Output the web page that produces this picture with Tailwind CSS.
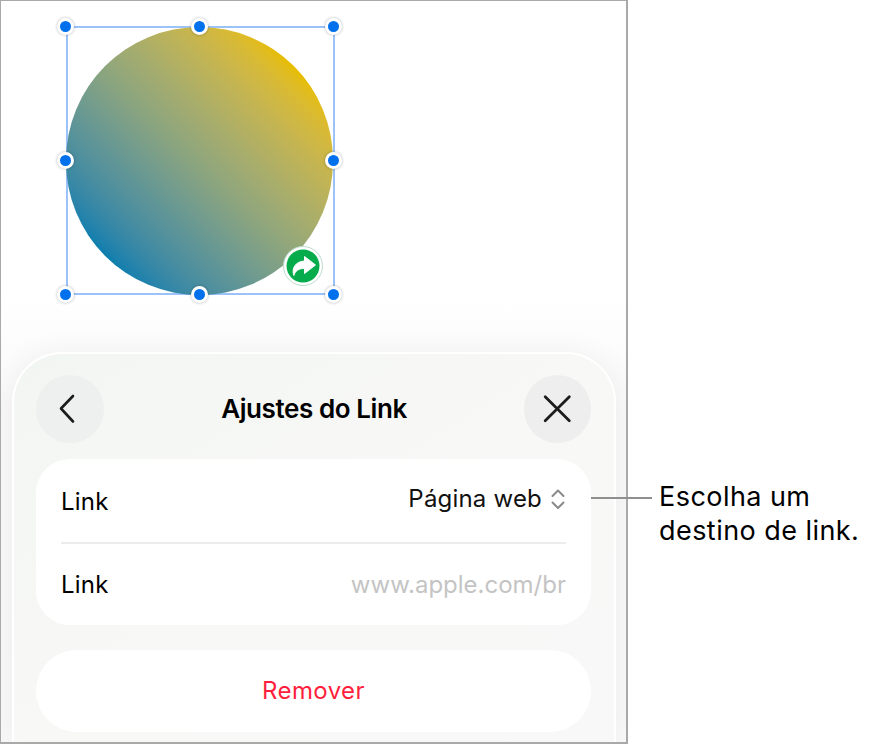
<!DOCTYPE html>
<html lang="pt">
<head>
  <meta charset="UTF-8" />
  <title>Ajustes do Link</title>
  <script src="https://cdn.jsdelivr.net/npm/@tailwindcss/browser@4"></script>
</head>
<body class="bg-white w-[872px] h-[745px] overflow-hidden font-['Inter',sans-serif] relative">
  <!-- device frame -->
  <div class="w-[628px] h-[744px] border border-[#a9a9a9] border-b-2 border-r-2 flex flex-col overflow-hidden bg-gradient-to-b from-white from-[40%] to-[#f8f8f8] to-[55%]">
    <!-- canvas with the selected shape -->
    <div class="h-[351px] shrink-0 pl-[65px] pt-[25px]">
      <div class="relative w-[269px] h-[269px] border-2 border-[#9cc2fa]">
        <div class="ml-[-2px] mt-[-1.5px] w-[267px] h-[268px] rounded-full bg-gradient-to-tr from-[#0f7fae] from-[15%] via-[#8fa67c] via-50% to-[#e6bd00] to-[85%]"></div>
        <span class="absolute left-[-11.5px] top-[-10.5px] w-[17px] h-[17px] rounded-full bg-[#0070ec] border-[3px] border-white shadow-[0_0_3px_rgba(0,0,0,0.3)]"></span>
        <span class="absolute left-[122.5px] top-[-10.5px] w-[17px] h-[17px] rounded-full bg-[#0070ec] border-[3px] border-white shadow-[0_0_3px_rgba(0,0,0,0.3)]"></span>
        <span class="absolute left-[256.5px] top-[-10.5px] w-[17px] h-[17px] rounded-full bg-[#0070ec] border-[3px] border-white shadow-[0_0_3px_rgba(0,0,0,0.3)]"></span>
        <span class="absolute left-[-11.5px] top-[124px] w-[17px] h-[17px] rounded-full bg-[#0070ec] border-[3px] border-white shadow-[0_0_3px_rgba(0,0,0,0.3)]"></span>
        <span class="absolute left-[256.5px] top-[124px] w-[17px] h-[17px] rounded-full bg-[#0070ec] border-[3px] border-white shadow-[0_0_3px_rgba(0,0,0,0.3)]"></span>
        <span class="absolute left-[-11.5px] top-[258px] w-[17px] h-[17px] rounded-full bg-[#0070ec] border-[3px] border-white shadow-[0_0_3px_rgba(0,0,0,0.3)]"></span>
        <span class="absolute left-[122.5px] top-[258px] w-[17px] h-[17px] rounded-full bg-[#0070ec] border-[3px] border-white shadow-[0_0_3px_rgba(0,0,0,0.3)]"></span>
        <span class="absolute left-[256.5px] top-[258px] w-[17px] h-[17px] rounded-full bg-[#0070ec] border-[3px] border-white shadow-[0_0_3px_rgba(0,0,0,0.3)]"></span>
        <!-- link badge -->
        <svg class="absolute left-[213.5px] top-[216.5px]" width="42" height="42" viewBox="0 0 42 42">
          <circle cx="21" cy="21" r="19.5" fill="#fff" stroke="#bcdccb" stroke-width="1" />
          <circle cx="21" cy="21" r="16.5" fill="#06ac4c" />
          <path d="M22.5 11.5 L33.5 20 L22.5 28.5 L22.5 23.5 C17 23.3 13.5 25.5 11.8 30.5 C9.5 23 13.5 16.5 22.5 16 Z" fill="#fff" stroke="#fff" stroke-width="1" stroke-linejoin="round" />
        </svg>
      </div>
    </div>

    <!-- link settings sheet -->
    <div class="mx-[11px] w-[604px] flex-1 rounded-t-[50px] border-2 border-b-0 border-white bg-gradient-to-br from-[#f2f6f2] via-[#f8f8f7] to-[#f8f8f8] shadow-[0_0_30px_rgba(0,0,0,0.05)] pl-[22px] pr-[23px] pt-[21px]">
      <div class="flex items-center justify-between h-[68px]">
        <button class="w-[68px] h-[68px] rounded-full bg-[#eeefef] flex items-center justify-center">
          <svg width="68" height="68" viewBox="0 0 68 68" fill="none" stroke="#1c1c1c" stroke-width="2.6" stroke-linecap="round" stroke-linejoin="round"><path d="M37 21 L25 33.5 L37 46.5" /></svg>
        </button>
        <h1 class="mb-[2px] text-[26px] font-semibold text-black tracking-[-0.42px]">Ajustes do Link</h1>
        <button class="w-[67px] h-[68px] rounded-full bg-[#eeeeee] flex items-center justify-center">
          <svg width="68" height="68" viewBox="0 0 68 68" fill="none" stroke="#1c1c1c" stroke-width="2.8" stroke-linecap="round"><path d="M21.5 21.5 L46 46 M46 21.5 L21.5 46" /></svg>
        </button>
      </div>

      <div class="mt-[16px] bg-white rounded-[34px] px-[25px] h-[166px] flex flex-col">
        <div class="h-[85px] shrink-0 flex items-center justify-between border-b-2 border-[#ececec]">
          <span class="mt-[2px] text-[24px] text-black tracking-[0.2px]">Link</span>
          <span class="mb-[4px] flex items-center gap-[8px] text-[24px] text-[#111] tracking-[0.2px]">
            Página web
            <svg width="16" height="22" viewBox="0 0 16 22" fill="none" stroke="#8a8a8a" stroke-width="2" stroke-linecap="round" stroke-linejoin="round"><path d="M2.5 8 L8 2.5 L13.5 8 M2.5 14.5 L8 20 L13.5 14.5" /></svg>
          </span>
        </div>
        <div class="flex-1 flex items-center justify-between">
          <span class="text-[24px] text-black tracking-[0.2px]">Link</span>
          <span class="text-[24px] text-[#c4c4c4]">www.apple.com/br</span>
        </div>
      </div>

      <button class="mt-[25px] w-full h-[82px] bg-white rounded-[41px] text-[24px] text-[#ff1f3d] tracking-[0.4px]">Remover</button>
    </div>
  </div>

  <!-- callout -->
  <div class="absolute left-[591px] top-[480px] flex items-start">
    <span class="w-[61px] h-[2px] bg-[#8f8f8f] mt-[17px]"></span>
    <p class="ml-[7px] text-[27px] leading-[34px] text-black tracking-[0.45px] w-[212px]">Escolha um destino de link.</p>
  </div>
</body>
</html>
